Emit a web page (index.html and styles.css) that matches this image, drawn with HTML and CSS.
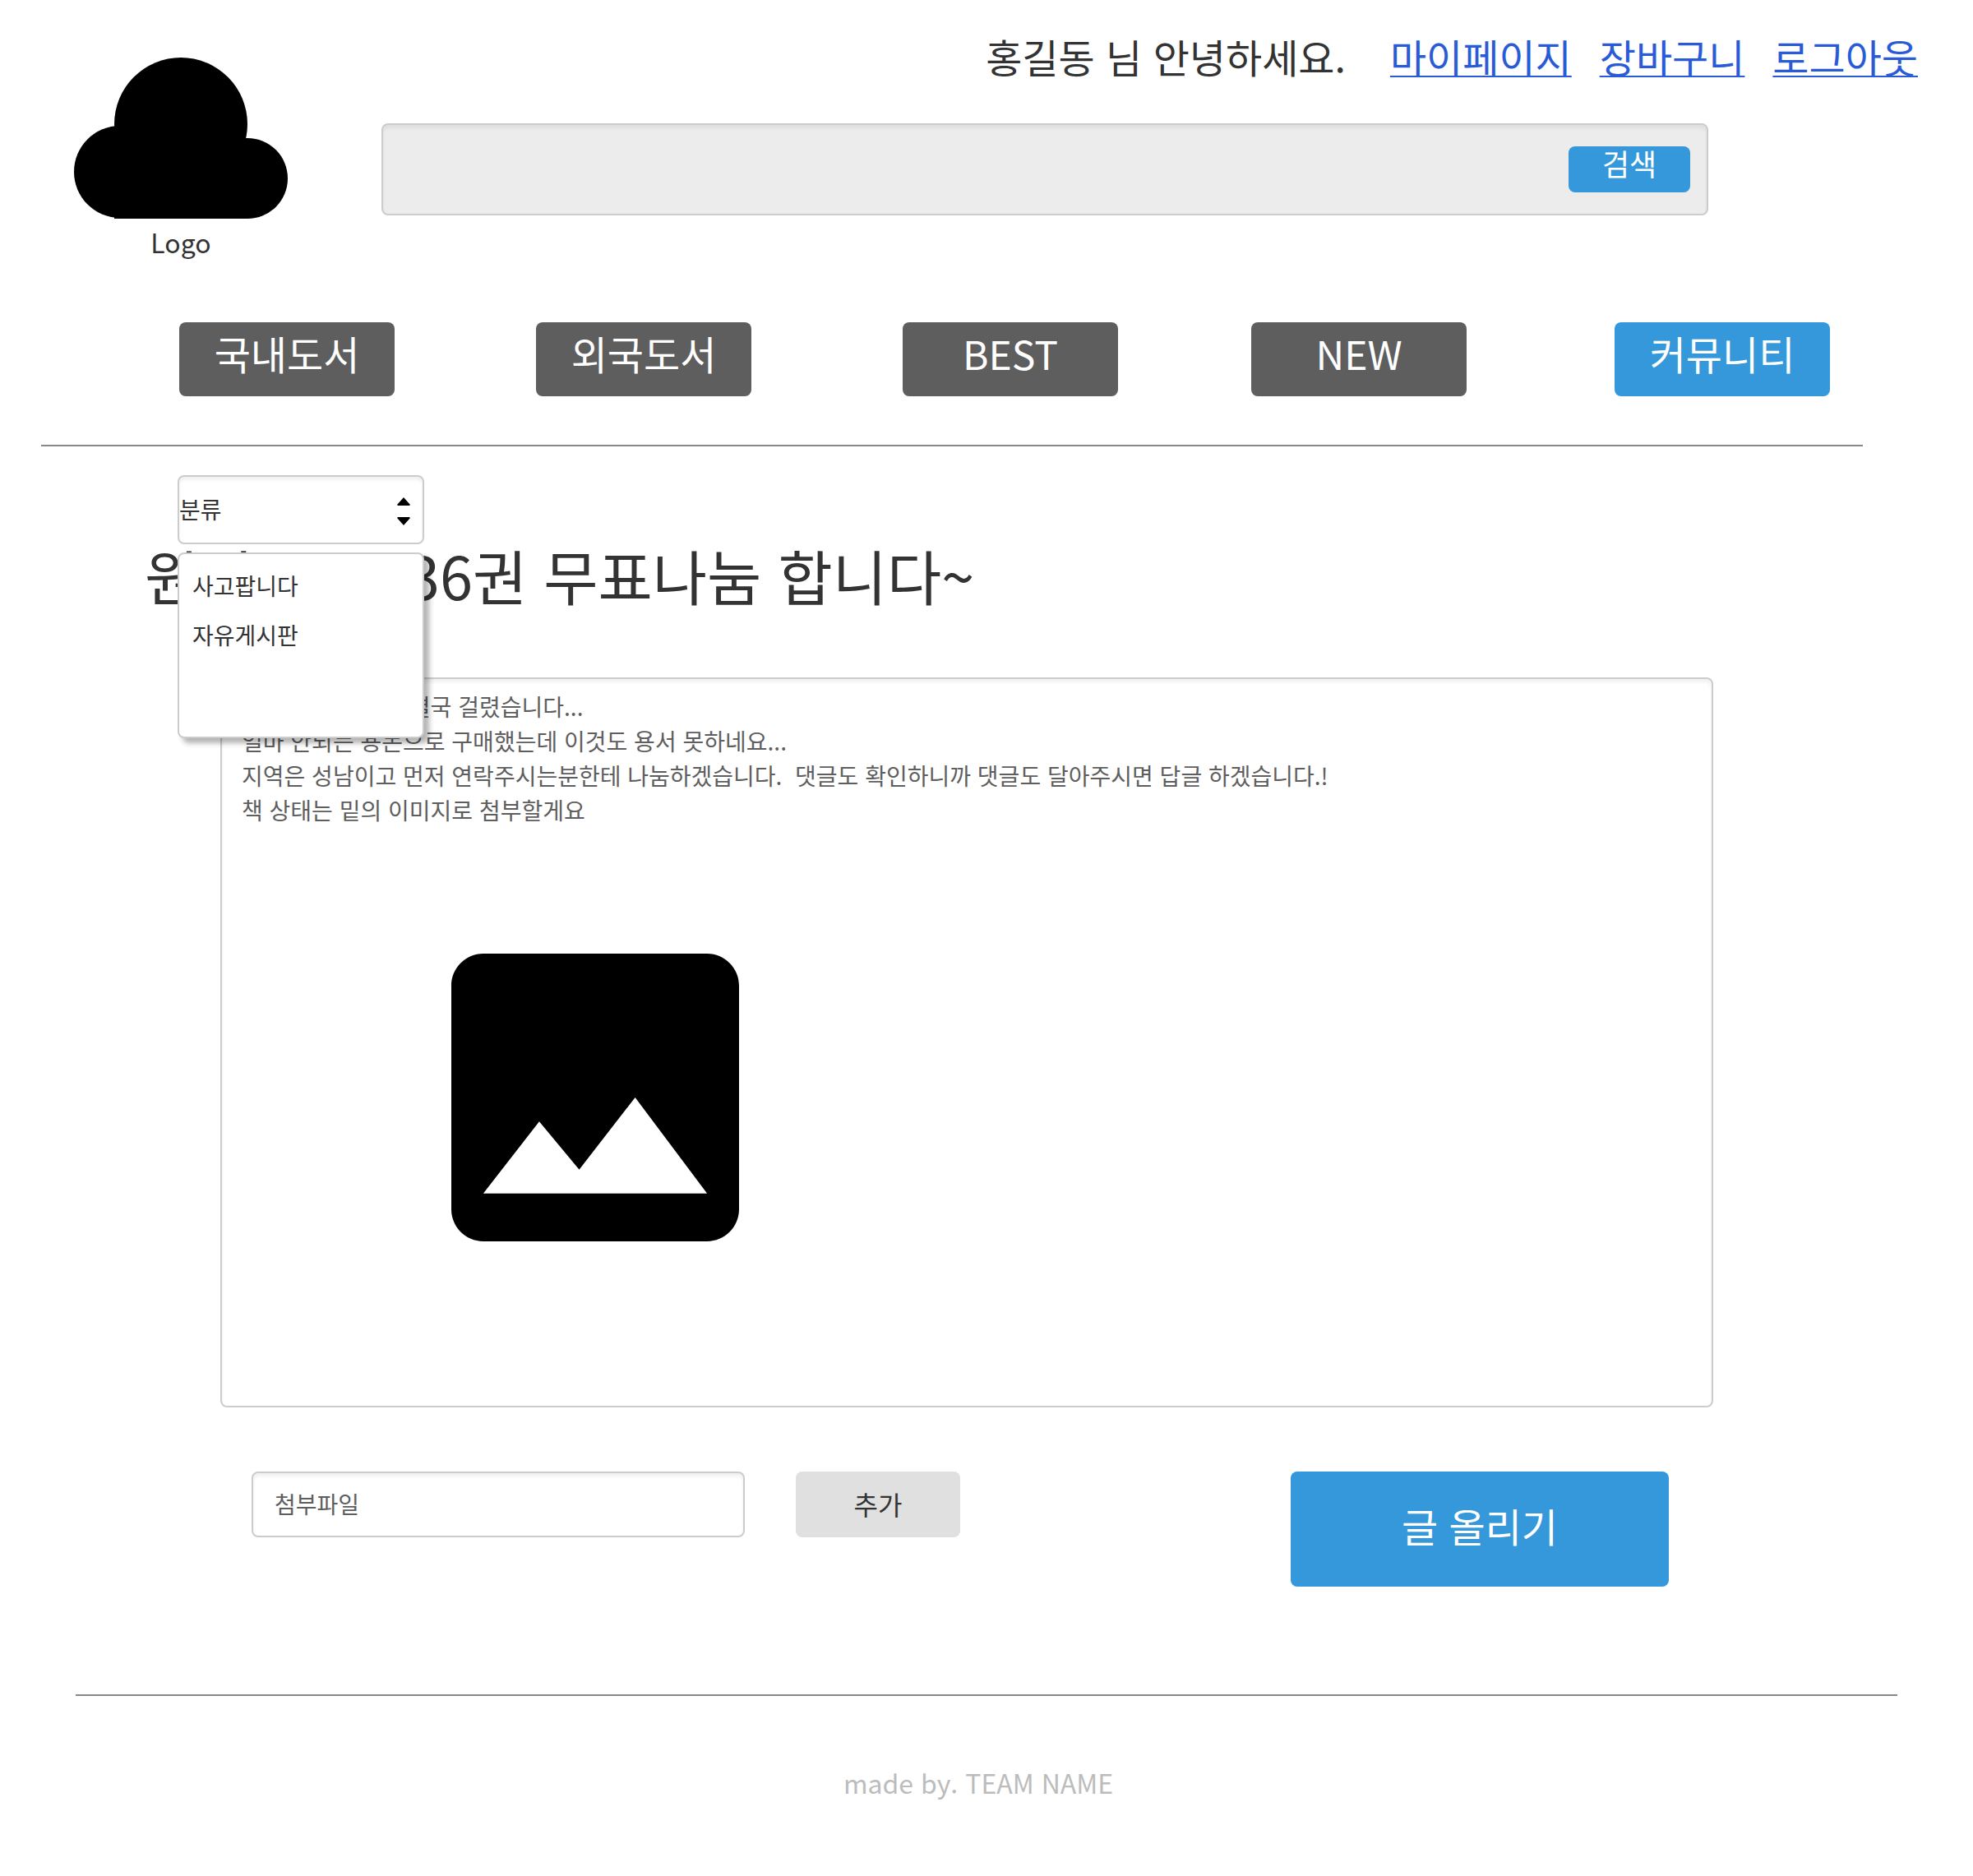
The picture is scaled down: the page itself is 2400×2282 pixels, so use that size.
FILE: index.html
```html
<!DOCTYPE html>
<html lang="ko">
<head>
<meta charset="utf-8">
<meta name="viewport" content="width=device-width, initial-scale=1">
<title>커뮤니티 글쓰기</title>
<link rel="stylesheet" href="styles.css">
</head>
<body>
<header class="header">
  <div class="brand">
    <svg class="brand-icon" viewBox="0 0 260 196" aria-hidden="true">
      <circle cx="130" cy="81" r="81"/>
      <circle cx="56" cy="139" r="56"/>
      <circle cx="211" cy="147" r="49"/>
      <path d="M49 100h162v96H49z"/>
    </svg>
    <span class="brand-name">Logo</span>
  </div>
  <div class="header-main">
    <div class="user-bar">
      <span class="greeting">홍길동 님 안녕하세요.</span>
      <nav class="user-links" aria-label="회원 메뉴">
        <a href="#mypage">마이페이지</a>
        <a href="#cart">장바구니</a>
        <a href="#logout">로그아웃</a>
      </nav>
    </div>
    <form class="search" role="search">
      <input class="search-input" type="search" aria-label="검색어">
      <button class="button search-button" type="button">검색</button>
    </form>
  </div>
</header>

<nav class="menu" aria-label="주 메뉴">
  <button class="button menu-button" type="button">국내도서</button>
  <button class="button menu-button" type="button">외국도서</button>
  <button class="button menu-button" type="button">BEST</button>
  <button class="button menu-button" type="button">NEW</button>
  <button class="button menu-button is-active" type="button">커뮤니티</button>
</nav>
<hr class="rule rule-top">

<main>
  <div class="category">
    <select class="category-select" aria-label="분류">
      <option>분류</option>
      <option>사고팝니다</option>
      <option>자유게시판</option>
    </select>
    <svg class="category-arrows" viewBox="0 0 16 34" aria-hidden="true">
      <path d="M8 0L16 9L15 10H1L0 9ZM8 34L16 25L15 24H1L0 25Z"/>
    </svg>
    <ul class="category-list">
      <li>사고팝니다</li>
      <li>자유게시판</li>
    </ul>
  </div>

  <h1 class="title">원피스 1~ 36권 무표나눔 합니다~</h1>

  <article class="field editor">
    <p class="editor-text">엄마 몰래 샀는데 결국 걸렸습니다...
얼마 안되는 용돈으로 구매했는데 이것도 용서 못하네요...
지역은 성남이고 먼저 연락주시는분한테 나눔하겠습니다.  댓글도 확인하니까 댓글도 달아주시면 답글 하겠습니다.!
책 상태는 밑의 이미지로 첨부할게요</p>
    <svg class="editor-image" viewBox="3 3 18 18" role="img" aria-label="첨부 이미지">
      <path d="M21 19V5c0-1.1-.9-2-2-2H5c-1.1 0-2 .9-2 2v14c0 1.1.9 2 2 2h14c1.1 0 2-.9 2-2zM8.5 13.5l2.5 3.01L14.5 12l4.5 6H5l3.5-4.5z"/>
    </svg>
  </article>

  <form class="actions">
    <input class="field file-name" type="text" value="첨부파일" aria-label="첨부파일">
    <button class="button add-button" type="button">추가</button>
    <button class="button submit-button" type="button">글 올리기</button>
  </form>
</main>

<footer>
  <hr class="rule rule-bottom">
  <p class="credit">made by. TEAM NAME</p>
</footer>
</body>
</html>
```
FILE: styles.css
```css
:root {
  --blue: #3498db;
  --text: #333;
  --muted: #5e5e5e;
  --line: #ccc;
}

* {
  box-sizing: border-box;
}

body {
  margin: 0;
  background: #fff;
  color: var(--text);
  font-family: "Noto Sans CJK KR", "Noto Sans", sans-serif;
  font-size: 28px;
  line-height: 42px;
}

button,
input,
select {
  margin: 0;
  font: inherit;
}

.button {
  border: 0;
  border-radius: 8px;
  padding: 0;
  background: var(--blue);
  color: #fff;
  cursor: pointer;
}

.field {
  border: 2px solid var(--line);
  border-radius: 8px;
  background: #fff;
  color: var(--muted);
  box-shadow: inset 0 4px 4px rgba(0, 0, 0, 0.06);
}

/* Header */
.header {
  display: flex;
  gap: 114px;
  padding-left: 90px;
}

.brand {
  display: flex;
  flex-direction: column;
  align-items: center;
  gap: 4px;
  padding-top: 70px;
}

.brand-icon {
  display: block;
  width: 260px;
  height: 196px;
}

.brand-name {
  font-size: 32px;
  line-height: 48px;
}

.header-main {
  flex: 1;
  padding-top: 32px;
}

.user-bar {
  display: flex;
  justify-content: flex-end;
  gap: 54px;
  padding-right: 67px;
  font-size: 48px;
  line-height: 72px;
}

.user-links {
  display: flex;
  gap: 34px;
}

.user-links a {
  color: #2a5bd7;
  text-decoration-thickness: 2px;
  text-underline-offset: 3px;
  text-decoration-skip-ink: none;
}

.search {
  display: flex;
  align-items: center;
  height: 112px;
  margin: 46px 322px 0 0;
  padding-right: 20px;
  border: 2px solid var(--line);
  border-radius: 8px;
  background: #ececec;
  box-shadow: inset 0 4px 4px rgba(0, 0, 0, 0.06);
}

.search-input {
  flex: 1;
  height: 100%;
  border: 0;
  padding: 0 24px;
  background: transparent;
  font-size: 36px;
}

.search-button {
  width: 148px;
  height: 56px;
  padding-bottom: 16px;
  font-size: 36px;
  line-height: 40px;
}

/* Main menu */
.menu {
  display: grid;
  grid-template-columns: 434fr 446fr 424fr 442fr 262fr;
  margin: 74px 174px 0 218px;
}

.menu-button {
  width: 262px;
  height: 90px;
  padding-bottom: 16px;
  background: #5e5e5e;
  font-size: 48px;
  line-height: 72px;
}

.menu-button.is-active {
  background: var(--blue);
}

.rule {
  height: 2px;
  border: 0;
  background: #888;
}

.rule-top {
  margin: 59px 134px 35px 50px;
}

/* Category picker with its open list */
.category {
  position: relative;
  width: 300px;
  margin-left: 216px;
}

.category-select {
  display: block;
  width: 100%;
  height: 84px;
  border: 2px solid var(--line);
  border-radius: 8px;
  padding: 0 0 2px;
  background: #fff;
  color: var(--text);
  box-shadow: inset 0 4px 4px rgba(0, 0, 0, 0.06);
  appearance: none;
}

.category-arrows {
  position: absolute;
  top: 27px;
  right: 17px;
  width: 16px;
  height: 34px;
  pointer-events: none;
}

.category-list {
  position: absolute;
  top: 94px;
  left: 0;
  z-index: 1;
  width: 100%;
  height: 226px;
  margin: 0;
  border: 2px solid var(--line);
  border-radius: 8px;
  padding: 8px 16px;
  background: #fff;
  box-shadow: 6px 6px 6px rgba(0, 0, 0, 0.3);
  line-height: 60px;
  list-style: none;
}

/* Post */
.title {
  margin: 0 176px 88px;
  font-size: 72px;
  font-weight: 400;
  line-height: 74px;
}

.editor {
  margin: 0 316px 0 268px;
  padding: 12px 24px 200px;
}

.editor-text {
  margin: 0;
  white-space: pre-wrap;
}

.editor-image {
  display: block;
  width: 350px;
  height: 350px;
  margin: 154px 0 0 255px;
}

.actions {
  display: flex;
  align-items: flex-start;
  gap: 62px;
  margin: 78px 370px 0 306px;
}

.file-name {
  width: 600px;
  height: 80px;
  padding: 0 26px 2px;
}

.add-button {
  width: 200px;
  height: 80px;
  padding-bottom: 2px;
  background: #e0e0e0;
  color: var(--text);
  font-size: 32px;
}

.submit-button {
  width: 460px;
  height: 140px;
  margin-left: auto;
  padding-bottom: 10px;
  font-size: 48px;
  line-height: 72px;
}

/* Footer */
.rule-bottom {
  margin: 131px 92px 81px;
}

.credit {
  margin: 0;
  padding: 0 20px 90px 0;
  color: #bcbcbc;
  font-size: 32px;
  line-height: 48px;
  text-align: center;
}
```
